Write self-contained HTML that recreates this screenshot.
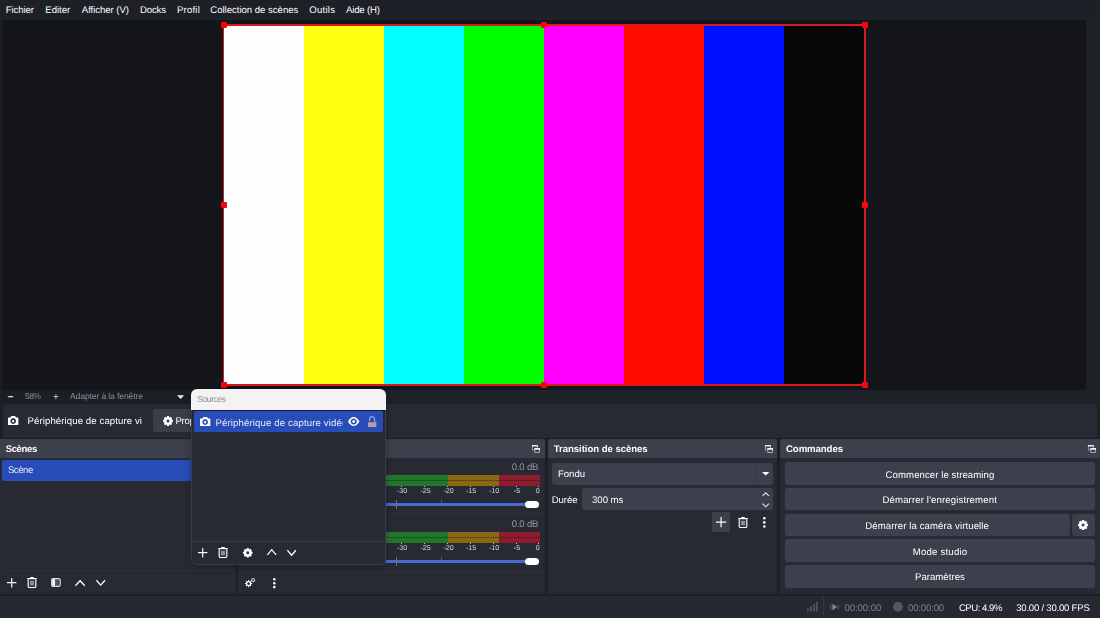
<!DOCTYPE html>
<html lang="fr">
<head>
<meta charset="utf-8">
<title>OBS Studio</title>
<style>
*{box-sizing:border-box;margin:0;padding:0}
html,body{width:1100px;height:618px;overflow:hidden;background:#1d1f26}
body{position:relative;font-family:"Liberation Sans",sans-serif;color:#fefefe}
.a{position:absolute}
.t{position:absolute;white-space:nowrap;display:block;line-height:12px}
svg{position:absolute;overflow:visible}
.hd{position:absolute;background:#3c404d;border-radius:3px 3px 0 0;top:439px;height:19.3px}
.bd{position:absolute;background:#272a33;top:458.3px;height:135.5px}
.btn{position:absolute;background:#3c404d;border-radius:3px}
.h{position:absolute;width:6px;height:6px;background:#f5060c;border-radius:1px}
</style>
</head>
<body>
<div id="app" style="position:absolute;left:0;top:0;width:1100px;height:618px;will-change:opacity;overflow:hidden;text-rendering:geometricPrecision">
<!-- menubar -->
<div class="a" style="left:0;top:0;width:1100px;height:20px;background:#1e2027"></div>

<!-- preview -->
<div class="a" style="left:2px;top:20px;width:1084px;height:369.6px;background:#15161c"></div>
<div class="a" style="left:1086px;top:20px;width:14px;height:384px;background:#1f2128"></div>
<!-- zoom row -->
<div class="a" style="left:2px;top:389.6px;width:1084px;height:14.4px;background:#1f2128"></div>

<div class="a" style="left:2px;top:389.6px;width:189px;height:14.4px;background:#1c1e25"></div>
<!-- colour bars -->
<div class="a" style="left:222.5px;top:24px;width:643.7px;height:362px;background:#d81a20"></div>
<div class="a" style="left:224.4px;top:26px;width:639.6px;height:358px;background:#080808;overflow:hidden">
  <div class="a" style="left:0;top:0;width:79.8px;height:358px;background:#fefefe"></div>
  <div class="a" style="left:79.6px;top:0;width:80.2px;height:358px;background:#ffff0f"></div>
  <div class="a" style="left:159.6px;top:0;width:80.2px;height:358px;background:#00ffff"></div>
  <div class="a" style="left:239.6px;top:0;width:80.2px;height:358px;background:#00ff00"></div>
  <div class="a" style="left:319.6px;top:0;width:80.2px;height:358px;background:#ff00ff"></div>
  <div class="a" style="left:399.6px;top:0;width:80.2px;height:358px;background:#ff0d00"></div>
  <div class="a" style="left:479.6px;top:0;width:80.2px;height:358px;background:#0010ff"></div>
  <div class="a" style="left:559.6px;top:0;width:80.2px;height:358px;background:#080808"></div>
</div>
<!-- handles -->
<div class="h" style="left:221px;top:22px"></div>
<div class="h" style="left:541.4px;top:22px"></div>
<div class="h" style="left:861.6px;top:22px"></div>
<div class="h" style="left:221px;top:202px"></div>
<div class="h" style="left:861.6px;top:202px"></div>
<div class="h" style="left:221px;top:382px"></div>
<div class="h" style="left:541.4px;top:382px"></div>
<div class="h" style="left:861.6px;top:382px"></div>

<!-- zoom row arrow -->
<svg style="left:177px;top:394.8px" width="7.2" height="4" viewBox="0 0 7.2 4"><path d="M0.1 0.2 L7.1 0.2 L3.6 3.9 Z" fill="#f0f0f2"/></svg>

<!-- context bar -->
<div class="a" style="left:2.5px;top:404px;width:1094.5px;height:33.6px;background:#272a33;border-radius:3px"></div>
<svg style="left:8px;top:416px" width="10.4" height="9.2" viewBox="0 0 10.4 9.2"><path fill="#fefefe" fill-rule="evenodd" d="M3.3 0.1 h3.8 l0.9 1.3 h1.7 a0.7 0.7 0 0 1 0.7 0.7 v6.3 a0.7 0.7 0 0 1 -0.7 0.7 h-9 a0.7 0.7 0 0 1 -0.7 -0.7 v-6.3 a0.7 0.7 0 0 1 0.7 -0.7 h1.7 z M5.2 2.35 a2.85 2.85 0 1 0 0.001 0 z M5.2 3.95 a1.25 1.25 0 1 1 -0.001 0 z"/></svg>
<div class="btn" style="left:153px;top:409px;width:60px;height:22.8px;background:#3a3e4a"></div>
<svg class="gear" style="left:163px;top:415.5px" width="10" height="10" viewBox="-5 -5 10 10"><use href="#gear"/></svg>

<!-- dock frames -->
<div class="hd" style="left:0;width:236.3px;border-radius:0 3px 0 0"></div>
<div class="bd" style="left:0;width:236.3px"></div>
<div class="hd" style="left:238.3px;width:306.8px"></div>
<div class="bd" style="left:238.3px;width:306.8px"></div>
<div class="hd" style="left:548px;width:229px"></div>
<div class="bd" style="left:548px;width:229px"></div>
<div class="hd" style="left:780px;width:320px;border-radius:3px 0 0 0"></div>
<div class="bd" style="left:780px;width:320px"></div>

<!-- scenes dock -->
<div class="a" style="left:2px;top:459.5px;width:232px;height:21px;background:#284cb8;border-radius:2px"></div>
<div class="a" style="left:3px;top:570.4px;width:230px;height:1px;background:#2f323c"></div>

<!-- mixer dock -->
<div class="a" style="left:240px;top:513px;width:303px;height:1px;background:#2f323c"></div>
<div class="a" style="left:240px;top:570.8px;width:303px;height:1px;background:#2e313b"></div>
<div class="a" style="left:240px;top:474.6px;width:208px;height:11px;background:#22772a"></div>
<div class="a" style="left:448px;top:474.6px;width:51.3px;height:11px;background:#8a6914"></div>
<div class="a" style="left:499.3px;top:474.6px;width:40.7px;height:11px;background:#8e1c2c"></div>
<div class="a" style="left:240px;top:479.6px;width:300px;height:1px;background:rgba(20,22,28,.38)"></div>
<div class="a" style="left:401.3px;top:485.6px;width:1px;height:1.6px;background:#c9cace"></div>
<div class="a" style="left:424.1px;top:485.6px;width:1px;height:1.6px;background:#c9cace"></div>
<div class="a" style="left:447.0px;top:485.6px;width:1px;height:1.6px;background:#c9cace"></div>
<div class="a" style="left:469.8px;top:485.6px;width:1px;height:1.6px;background:#c9cace"></div>
<div class="a" style="left:492.7px;top:485.6px;width:1px;height:1.6px;background:#c9cace"></div>
<div class="a" style="left:515.5px;top:485.6px;width:1px;height:1.6px;background:#c9cace"></div>
<div class="a" style="left:538.4px;top:485.6px;width:1px;height:1.6px;background:#c9cace"></div>
<div class="a" style="left:240px;top:502.7px;width:296px;height:3px;background:#4769d2;border-radius:1.5px"></div>
<div class="a" style="left:396px;top:499.8px;width:1px;height:9px;background:#6b7184"></div>
<div class="a" style="left:441px;top:499.8px;width:1px;height:3px;background:#555a6b"></div>
<div class="a" style="left:524.8px;top:500.8px;width:14.6px;height:7.2px;background:#fefefe;border-radius:3.6px"></div>
<div class="a" style="left:240px;top:531.6px;width:208px;height:11px;background:#22772a"></div>
<div class="a" style="left:448px;top:531.6px;width:51.3px;height:11px;background:#8a6914"></div>
<div class="a" style="left:499.3px;top:531.6px;width:40.7px;height:11px;background:#8e1c2c"></div>
<div class="a" style="left:240px;top:536.6px;width:300px;height:1px;background:rgba(20,22,28,.38)"></div>
<div class="a" style="left:401.3px;top:542.6px;width:1px;height:1.6px;background:#c9cace"></div>
<div class="a" style="left:424.1px;top:542.6px;width:1px;height:1.6px;background:#c9cace"></div>
<div class="a" style="left:447.0px;top:542.6px;width:1px;height:1.6px;background:#c9cace"></div>
<div class="a" style="left:469.8px;top:542.6px;width:1px;height:1.6px;background:#c9cace"></div>
<div class="a" style="left:492.7px;top:542.6px;width:1px;height:1.6px;background:#c9cace"></div>
<div class="a" style="left:515.5px;top:542.6px;width:1px;height:1.6px;background:#c9cace"></div>
<div class="a" style="left:538.4px;top:542.6px;width:1px;height:1.6px;background:#c9cace"></div>
<div class="a" style="left:240px;top:559.7px;width:296px;height:3px;background:#4769d2;border-radius:1.5px"></div>
<div class="a" style="left:396px;top:556.8px;width:1px;height:9px;background:#6b7184"></div>
<div class="a" style="left:441px;top:556.8px;width:1px;height:3px;background:#555a6b"></div>
<div class="a" style="left:524.8px;top:557.8px;width:14.6px;height:7.2px;background:#fefefe;border-radius:3.6px"></div>

<!-- transitions dock -->
<div class="btn" style="left:552px;top:462.6px;width:221.3px;height:22px"></div>
<div class="a" style="left:756px;top:463.6px;width:1px;height:20px;background:#343844"></div>
<svg style="left:761.7px;top:472.3px" width="7.4" height="3.5" viewBox="0 0 7.4 3.5"><path d="M0.1 0.1 L7.3 0.1 L3.7 3.4 Z" fill="#fefefe"/></svg>
<div class="btn" style="left:581.8px;top:488.2px;width:191.5px;height:22.2px"></div>
<svg style="left:761.7px;top:491.5px" width="7.4" height="16" viewBox="0 0 7.4 16"><path d="M0.5 3.9 L3.7 0.8 L6.9 3.9 M0.5 11.7 L3.7 14.8 L6.9 11.7" fill="none" stroke="#e8e8ea" stroke-width="1.05"/></svg>
<div class="btn" style="left:712px;top:512.2px;width:17.8px;height:19.6px;border-radius:2px"></div>

<!-- commands dock -->
<div class="btn" style="left:785px;top:462px;width:310px;height:22.5px"></div>
<div class="btn" style="left:785px;top:487.8px;width:310px;height:22.5px"></div>
<div class="btn" style="left:785px;top:513.6px;width:284.7px;height:22.5px"></div>
<div class="btn" style="left:1072px;top:513.6px;width:23px;height:22.5px"></div>
<div class="btn" style="left:785px;top:539.4px;width:310px;height:22.5px"></div>
<div class="btn" style="left:785px;top:565.2px;width:310px;height:22.5px"></div>

<!-- status bar -->
<div class="a" style="left:0;top:595.8px;width:1100px;height:22.2px;background:#272932"></div>
<div class="a" style="left:822.5px;top:597px;width:1.4px;height:21px;background:#333640"></div>

<span class="t" style="left:5.8px;top:5px;font-size:9.6px;color:#fefefe;letter-spacing:-0.099px;">Fichier</span>
<span class="t" style="left:45.3px;top:5px;font-size:9.6px;color:#fefefe;letter-spacing:-0.032px;">Editer</span>
<span class="t" style="left:81.8px;top:5px;font-size:9.6px;color:#fefefe;letter-spacing:-0.056px;">Afficher (V)</span>
<span class="t" style="left:140px;top:5px;font-size:9.6px;color:#fefefe;letter-spacing:-0.164px;">Docks</span>
<span class="t" style="left:177px;top:5px;font-size:9.6px;color:#fefefe;letter-spacing:0.188px;">Profil</span>
<span class="t" style="left:210.3px;top:5px;font-size:9.6px;color:#fefefe;letter-spacing:-0.028px;">Collection de scènes</span>
<span class="t" style="left:309.3px;top:5px;font-size:9.6px;color:#fefefe;letter-spacing:0.234px;">Outils</span>
<span class="t" style="left:346px;top:5px;font-size:9.6px;color:#fefefe;letter-spacing:-0.170px;">Aide (H)</span>
<span class="t" style="left:7.6px;top:392px;font-size:10px;color:#e6e6e9;font-weight:700;letter-spacing:0.000px;">−</span>
<span class="t" style="left:25px;top:390px;font-size:8.6px;color:#8b8e97;letter-spacing:-0.602px;">58%</span>
<span class="t" style="left:53px;top:392px;font-size:10px;color:#d8d9dc;letter-spacing:0.000px;">+</span>
<span class="t" style="left:70px;top:390px;font-size:8.6px;color:#8b8e97;letter-spacing:-0.132px;">Adapter à la fenêtre</span>
<span class="t" style="left:27.5px;top:416px;font-size:9.6px;color:#fefefe;letter-spacing:0.100px;">Périphérique de capture vi</span>
<span class="t" style="left:175.5px;top:416px;font-size:9.6px;color:#fefefe;letter-spacing:-0.304px;">Propriétés</span>
<span class="t" style="left:5.7px;top:444px;font-size:9.6px;color:#fefefe;font-weight:700;letter-spacing:-0.402px;">Scènes</span>
<span class="t" style="left:553.8px;top:444px;font-size:9.6px;color:#fefefe;font-weight:700;letter-spacing:-0.054px;">Transition de scènes</span>
<span class="t" style="left:786px;top:444px;font-size:9.6px;color:#fefefe;font-weight:700;letter-spacing:-0.072px;">Commandes</span>
<span class="t" style="left:7.9px;top:465px;font-size:9.6px;color:#dfe6fb;letter-spacing:-0.451px;">Scène</span>
<span class="t" style="left:558px;top:469px;font-size:9.6px;color:#fefefe;letter-spacing:-0.051px;">Fondu</span>
<span class="t" style="left:551.7px;top:495px;font-size:9.6px;color:#fefefe;letter-spacing:-0.060px;">Durée</span>
<span class="t" style="left:592px;top:495px;font-size:9.6px;color:#fefefe;letter-spacing:-0.014px;">300 ms</span>
<span class="t" style="left:885.6px;top:470px;font-size:9.6px;color:#fefefe;letter-spacing:0.073px;">Commencer le streaming</span>
<span class="t" style="left:882.5px;top:495px;font-size:9.6px;color:#fefefe;letter-spacing:0.132px;">Démarrer l'enregistrement</span>
<span class="t" style="left:865.2px;top:521px;font-size:9.6px;color:#fefefe;letter-spacing:0.099px;">Démarrer la caméra virtuelle</span>
<span class="t" style="left:912.7px;top:547px;font-size:9.6px;color:#fefefe;letter-spacing:0.223px;">Mode studio</span>
<span class="t" style="left:915px;top:572px;font-size:9.6px;color:#fefefe;letter-spacing:0.023px;">Paramètres</span>
<span class="t" style="left:511.8px;top:462px;font-size:9.6px;color:#9598a1;letter-spacing:-0.230px;">0.0 dB</span>
<span class="t" style="left:511.8px;top:519px;font-size:9.6px;color:#9598a1;letter-spacing:-0.230px;">0.0 dB</span>
<span class="t" style="left:397px;top:485px;font-size:7.1px;color:#dcdde1;letter-spacing:-0.033px;">-30</span>
<span class="t" style="left:420.4px;top:485px;font-size:7.1px;color:#dcdde1;letter-spacing:0.017px;">-25</span>
<span class="t" style="left:443.5px;top:485px;font-size:7.1px;color:#dcdde1;letter-spacing:-0.083px;">-20</span>
<span class="t" style="left:466px;top:485px;font-size:7.1px;color:#dcdde1;letter-spacing:-0.083px;">-15</span>
<span class="t" style="left:489px;top:485px;font-size:7.1px;color:#dcdde1;letter-spacing:-0.033px;">-10</span>
<span class="t" style="left:513.7px;top:485px;font-size:7.1px;color:#dcdde1;letter-spacing:0.188px;">-5</span>
<span class="t" style="left:535.8px;top:485px;font-size:7.1px;color:#dcdde1;letter-spacing:0.000px;">0</span>
<span class="t" style="left:397px;top:542px;font-size:7.1px;color:#dcdde1;letter-spacing:-0.033px;">-30</span>
<span class="t" style="left:420.4px;top:542px;font-size:7.1px;color:#dcdde1;letter-spacing:0.017px;">-25</span>
<span class="t" style="left:443.5px;top:542px;font-size:7.1px;color:#dcdde1;letter-spacing:-0.083px;">-20</span>
<span class="t" style="left:466px;top:542px;font-size:7.1px;color:#dcdde1;letter-spacing:-0.083px;">-15</span>
<span class="t" style="left:489px;top:542px;font-size:7.1px;color:#dcdde1;letter-spacing:-0.033px;">-10</span>
<span class="t" style="left:513.7px;top:542px;font-size:7.1px;color:#dcdde1;letter-spacing:0.188px;">-5</span>
<span class="t" style="left:535.8px;top:542px;font-size:7.1px;color:#dcdde1;letter-spacing:0.000px;">0</span>
<span class="t" style="left:844.5px;top:603px;font-size:9.6px;color:#7d808b;letter-spacing:-0.080px;">00:00:00</span>
<span class="t" style="left:908px;top:603px;font-size:9.6px;color:#7d808b;letter-spacing:-0.166px;">00:00:00</span>
<span class="t" style="left:958.9px;top:603px;font-size:9.6px;color:#fefefe;letter-spacing:-0.484px;">CPU: 4.9%</span>
<span class="t" style="left:1016.2px;top:603px;font-size:9.6px;color:#fefefe;letter-spacing:-0.234px;">30.00 / 30.00 FPS</span>

<svg style="left:6.7px;top:577.8px" width="9.4" height="9.4" viewBox="0 0 9.4 9.4"><path d="M4.7 0 V9.4 M0 4.7 H9.4" stroke="#fefefe" stroke-width="1.15" fill="none"/></svg>
<svg style="left:27px;top:577.1px" width="10" height="11" viewBox="0 0 10 11"><path d="M0.2 1.6 H9.8 M3.2 0.5 H6.8" stroke="#fefefe" stroke-width="1.1" fill="none"/><path d="M1.2 2.2 V9.2 a1.3 1.3 0 0 0 1.3 1.3 H7.5 a1.3 1.3 0 0 0 1.3 -1.3 V2.2" stroke="#fefefe" stroke-width="1.15" fill="none"/><rect x="2.9" y="3.8" width="4.2" height="4.6" fill="#8d8f96"/></svg>
<svg style="left:51.1px;top:578.1px" width="9.8" height="9" viewBox="0 0 9.8 9"><defs><linearGradient id="fg" x1="0" x2="1" y1="0" y2="0"><stop offset="0" stop-color="#7b7d85"/><stop offset="1" stop-color="#3a3d47"/></linearGradient></defs><rect x="0.6" y="0.6" width="8.6" height="7.8" rx="1.4" fill="url(#fg)" stroke="#d9dadd" stroke-width="1.1"/><rect x="1.3" y="1.2" width="2.6" height="6.6" fill="#fefefe"/></svg>
<svg style="left:75.2px;top:579.6px" width="10.2" height="6.0" viewBox="0 0 10.2 6.0"><path d="M0.4 5.70 L5.10 0.7 L9.80 5.70" stroke="#fefefe" stroke-width="1.3" fill="none"/></svg>
<svg style="left:95.8px;top:580.2px" width="9.4" height="5.8" viewBox="0 0 9.4 5.8"><path d="M0.4 0.3 L4.70 5.10 L9.00 0.3" stroke="#fefefe" stroke-width="1.3" fill="none"/></svg>
<svg style="left:245.0px;top:580.1px" width="7.2" height="7.2" viewBox="-5 -5 10 10"><use href="#gear2" fill="#fefefe"/></svg><svg style="left:251.2px;top:578.2px" width="4.2" height="4.2" viewBox="-5 -5 10 10"><use href="#gear3" fill="#fefefe"/></svg>
<svg style="left:273.1px;top:577.5px" width="2.6" height="10.4" viewBox="0 0 2.6 10.4"><circle cx="1.3" cy="1.30" r="1.3" fill="#fefefe"/><circle cx="1.3" cy="5.20" r="1.3" fill="#fefefe"/><circle cx="1.3" cy="9.10" r="1.3" fill="#fefefe"/></svg>
<svg style="left:532.3px;top:444.8px" width="8.1" height="8.1" viewBox="0 0 8.1 8.1"><path d="M0.35 0.5 V4.95 H2.4 M5.45 0.5 V3" fill="none" stroke="#c4c5cb" stroke-width="0.7"/><rect x="0" y="0" width="5.8" height="1.5" fill="#ececef"/><rect x="2.85" y="3.45" width="4.8" height="4.2" fill="none" stroke="#d4d5da" stroke-width="0.7"/><rect x="2.5" y="3.1" width="5.5" height="1.6" fill="#fefefe"/></svg>
<svg style="left:764.6px;top:444.8px" width="8.1" height="8.1" viewBox="0 0 8.1 8.1"><path d="M0.35 0.5 V4.95 H2.4 M5.45 0.5 V3" fill="none" stroke="#c4c5cb" stroke-width="0.7"/><rect x="0" y="0" width="5.8" height="1.5" fill="#ececef"/><rect x="2.85" y="3.45" width="4.8" height="4.2" fill="none" stroke="#d4d5da" stroke-width="0.7"/><rect x="2.5" y="3.1" width="5.5" height="1.6" fill="#fefefe"/></svg>
<svg style="left:1088.0px;top:444.8px" width="8.1" height="8.1" viewBox="0 0 8.1 8.1"><path d="M0.35 0.5 V4.95 H2.4 M5.45 0.5 V3" fill="none" stroke="#c4c5cb" stroke-width="0.7"/><rect x="0" y="0" width="5.8" height="1.5" fill="#ececef"/><rect x="2.85" y="3.45" width="4.8" height="4.2" fill="none" stroke="#d4d5da" stroke-width="0.7"/><rect x="2.5" y="3.1" width="5.5" height="1.6" fill="#fefefe"/></svg>
<svg style="left:716.0px;top:517.2px" width="10.2" height="10.2" viewBox="0 0 10.2 10.2"><path d="M5.1 0 V10.2 M0 5.1 H10.2" stroke="#fefefe" stroke-width="1.2" fill="none"/></svg>
<svg style="left:737.6px;top:516.6px" width="10" height="11" viewBox="0 0 10 11"><path d="M0.2 1.6 H9.8 M3.2 0.5 H6.8" stroke="#fefefe" stroke-width="1.1" fill="none"/><path d="M1.2 2.2 V9.2 a1.3 1.3 0 0 0 1.3 1.3 H7.5 a1.3 1.3 0 0 0 1.3 -1.3 V2.2" stroke="#fefefe" stroke-width="1.15" fill="none"/><rect x="2.9" y="3.8" width="4.2" height="4.6" fill="#8d8f96"/></svg>
<svg style="left:762.8px;top:517.0px" width="2.6" height="10.8" viewBox="0 0 2.6 10.8"><circle cx="1.3" cy="1.30" r="1.3" fill="#fefefe"/><circle cx="1.3" cy="5.40" r="1.3" fill="#fefefe"/><circle cx="1.3" cy="9.50" r="1.3" fill="#fefefe"/></svg>
<svg style="left:1078.3px;top:520.4px" width="10.2" height="10.2" viewBox="-5 -5 10 10"><use href="#gear" fill="#fefefe"/></svg>
<svg style="left:806.6px;top:602.3px" width="11" height="9.5" viewBox="0 0 11 9.5"><rect x="0.00" y="6.30" width="2.1" height="3.2" fill="#4b4e5c"/><rect x="2.95" y="4.20" width="2.1" height="5.3" fill="#4b4e5c"/><rect x="5.90" y="2.10" width="2.1" height="7.4" fill="#4b4e5c"/><rect x="8.85" y="0.00" width="2.1" height="9.5" fill="#4b4e5c"/></svg>
<svg style="left:830px;top:603.3px" width="10" height="8" viewBox="-5 -4 10 8"><path d="M-2.6 -3.2 L2.2 0 L-2.6 3.2 Z" fill="#858893"/><path d="M2.6 -2.6 A3.6 3.6 0 0 1 2.6 2.6 M-3.4 -2.6 A3.6 3.6 0 0 0 -3.4 2.6" fill="none" stroke="#5b5e6a" stroke-width="1"/></svg>
<svg style="left:893.3px;top:602.2px" width="9.8" height="9.8" viewBox="0 0 9.8 9.8"><circle cx="4.9" cy="4.9" r="4.9" fill="#545764"/></svg>

<!-- floating Sources panel -->
<div class="a" style="left:190.5px;top:388.6px;width:195.2px;height:176.2px;background:#272a33;border-radius:6px 6px 5px 5px;box-shadow:0 2px 7px rgba(12,13,18,.32);overflow:hidden">
  <div class="a" style="left:0;top:0;width:196px;height:21px;background:#f3f3f3"></div>
  <div class="a" style="left:0;top:21px;width:196px;height:1.6px;background:#1b1d24"></div>
  <div class="a" style="left:3px;top:22.6px;width:189.5px;height:21.2px;background:#284cb8;border-radius:2px"></div>
  <div class="a" style="left:1.5px;top:152.4px;width:192px;height:1px;background:#363a46"></div>
  <div class="a" style="left:0;top:21px;width:195.2px;height:155.2px;border:1px solid #393c48;border-top:none;border-radius:0 0 5px 5px"></div>
</div>
<span class="t p" style="left:197px;top:393px;font-size:8.8px;color:#8f8f8f;letter-spacing:-0.547px;">Sources</span>
<span class="t p" style="left:215.5px;top:418px;font-size:9.6px;color:#e6ecfd;letter-spacing:0.132px;clip-path:inset(0 4.8px 0 0);">Périphérique de capture vidéo</span>
<svg style="left:200px;top:417px" width="10.4" height="9.2" viewBox="0 0 10.4 9.2"><path fill="#fefefe" fill-rule="evenodd" d="M3.3 0.1 h3.8 l0.9 1.3 h1.7 a0.7 0.7 0 0 1 0.7 0.7 v6.3 a0.7 0.7 0 0 1 -0.7 0.7 h-9 a0.7 0.7 0 0 1 -0.7 -0.7 v-6.3 a0.7 0.7 0 0 1 0.7 -0.7 h1.7 z M5.2 2.35 a2.85 2.85 0 1 0 0.001 0 z M5.2 3.95 a1.25 1.25 0 1 1 -0.001 0 z"/></svg>
<svg style="left:347.7px;top:417.1px" width="11.4" height="9" viewBox="-5.7 -4.5 11.4 9"><path fill="#fefefe" fill-rule="evenodd" d="M-5.7 0 C-4.2 -2.9 -2.2 -4.5 0 -4.5 C2.2 -4.5 4.2 -2.9 5.7 0 C4.2 2.9 2.2 4.5 0 4.5 C-2.2 4.5 -4.2 2.9 -5.7 0 Z M0 -3.1 a3.1 3.1 0 1 0 0.001 0 Z M0 -1.45 a1.45 1.45 0 1 1 -0.001 0 Z"/></svg>
<svg style="left:367.7px;top:416.1px" width="8.4" height="11.2" viewBox="0 0 8.4 11.2"><path d="M1.6 5.2 V3.2 a2.5 2.5 0 0 1 5 0 V6.4" fill="none" stroke="#9fb3e6" stroke-width="1.2" opacity="0.9"/><rect x="0" y="6.3" width="8.4" height="4.8" rx="0.5" fill="#c4a79c" opacity="0.92"/></svg>
<svg style="left:198.0px;top:548.1px" width="9.4" height="9.4" viewBox="0 0 9.4 9.4"><path d="M4.7 0 V9.4 M0 4.7 H9.4" stroke="#fefefe" stroke-width="1.15" fill="none"/></svg>
<svg style="left:218.3px;top:547.1px" width="10" height="11" viewBox="0 0 10 11"><path d="M0.2 1.6 H9.8 M3.2 0.5 H6.8" stroke="#fefefe" stroke-width="1.1" fill="none"/><path d="M1.2 2.2 V9.2 a1.3 1.3 0 0 0 1.3 1.3 H7.5 a1.3 1.3 0 0 0 1.3 -1.3 V2.2" stroke="#fefefe" stroke-width="1.15" fill="none"/><rect x="2.9" y="3.8" width="4.2" height="4.6" fill="#8d8f96"/></svg>
<svg style="left:242.7px;top:547.8px" width="9.6" height="9.6" viewBox="-5 -5 10 10"><use href="#gear" fill="#fefefe"/></svg>
<svg style="left:266.8px;top:549.3px" width="9.5" height="6.2" viewBox="0 0 9.5 6.2"><path d="M0.4 5.90 L4.75 0.7 L9.10 5.90" stroke="#fefefe" stroke-width="1.3" fill="none"/></svg>
<svg style="left:286.9px;top:550.1px" width="9.3" height="5.9" viewBox="0 0 9.3 5.9"><path d="M0.4 0.3 L4.65 5.20 L8.90 0.3" stroke="#fefefe" stroke-width="1.3" fill="none"/></svg>

<svg width="0" height="0" style="left:0;top:0">
<defs>
<path id="gear" fill="#fefefe" fill-rule="evenodd" d="M-1.24 -3.80 L-0.98 -4.90 L0.98 -4.90 L1.24 -3.80 L1.82 -3.56 L2.78 -4.16 L4.16 -2.78 L3.56 -1.82 L3.80 -1.24 L4.90 -0.98 L4.90 0.98 L3.80 1.24 L3.56 1.82 L4.16 2.78 L2.78 4.16 L1.82 3.56 L1.24 3.80 L0.98 4.90 L-0.98 4.90 L-1.24 3.80 L-1.82 3.56 L-2.78 4.16 L-4.16 2.78 L-3.56 1.82 L-3.80 1.24 L-4.90 0.98 L-4.90 -0.98 L-3.80 -1.24 L-3.56 -1.82 L-4.16 -2.78 L-2.78 -4.16 L-1.82 -3.56 Z M0 -1.50 a1.50 1.50 0 1 0 0.001 0 Z"/>
<path id="gear2" fill-rule="evenodd" d="M-0.79 -3.51 L-0.67 -4.96 L0.67 -4.96 L0.79 -3.51 L1.93 -3.04 L3.03 -3.97 L3.97 -3.03 L3.04 -1.93 L3.51 -0.79 L4.96 -0.67 L4.96 0.67 L3.51 0.79 L3.04 1.93 L3.97 3.03 L3.03 3.97 L1.93 3.04 L0.79 3.51 L0.67 4.96 L-0.67 4.96 L-0.79 3.51 L-1.93 3.04 L-3.03 3.97 L-3.97 3.03 L-3.04 1.93 L-3.51 0.79 L-4.96 0.67 L-4.96 -0.67 L-3.51 -0.79 L-3.04 -1.93 L-3.97 -3.03 L-3.03 -3.97 L-1.93 -3.04 Z M0 -1.90 a1.90 1.90 0 1 0 0.001 0 Z"/><path id="gear3" fill-rule="evenodd" d="M-0.93 -3.89 L-0.78 -4.94 L0.78 -4.94 L0.93 -3.89 L2.09 -3.41 L2.94 -4.05 L4.05 -2.94 L3.41 -2.09 L3.89 -0.93 L4.94 -0.78 L4.94 0.78 L3.89 0.93 L3.41 2.09 L4.05 2.94 L2.94 4.05 L2.09 3.41 L0.93 3.89 L0.78 4.94 L-0.78 4.94 L-0.93 3.89 L-2.09 3.41 L-2.94 4.05 L-4.05 2.94 L-3.41 2.09 L-3.89 0.93 L-4.94 0.78 L-4.94 -0.78 L-3.89 -0.93 L-3.41 -2.09 L-4.05 -2.94 L-2.94 -4.05 L-2.09 -3.41 Z M0 -2.40 a2.40 2.40 0 1 0 0.001 0 Z"/></defs>
</svg>
</div>
</body>
</html>
